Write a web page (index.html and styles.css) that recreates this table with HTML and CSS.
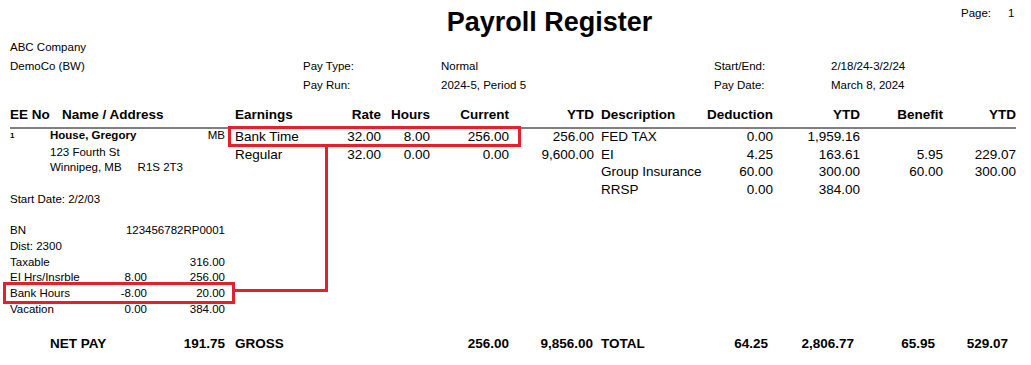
FILE: index.html
```html
<!DOCTYPE html>
<html lang="en">
<head>
<meta charset="utf-8">
<title>Payroll Register</title>
<link rel="stylesheet" href="styles.css">
</head>
<body>
<div class="sheet">
  <div class="top">
    <h1 class="title">Payroll Register</h1>
    <div class="pageno"><span>Page:</span><span>1</span></div>
  </div>

  <div class="info">
    <div>ABC Company</div><div></div><div></div><div></div><div></div>
    <div>DemoCo (BW)</div><div>Pay Type:</div><div>Normal</div><div>Start/End:</div><div>2/18/24-3/2/24</div>
    <div></div><div>Pay Run:</div><div>2024-5, Period 5</div><div>Pay Date:</div><div>March 8, 2024</div>
  </div>

  <div class="row head">
    <div class="left lhead"><span class="eeno">EE No</span><span>Name / Address</span></div>
    <div class="earn">
      <span>Earnings</span><span class="r">Rate</span><span class="r">Hours</span><span class="r">Current</span><span class="r">YTD</span>
    </div>
    <div class="ded">
      <span>Description</span><span class="r">Deduction</span><span class="r">YTD</span><span class="r">Benefit</span><span class="r">YTD</span>
    </div>
  </div>

  <div class="row body">
    <div class="left emp">
      <div class="emp-top"><div class="num"><span>1</span></div><div class="name">House, Gregory</div><div class="prov">MB</div></div>
      <div class="indent">123 Fourth St</div>
      <div class="indent">Winnipeg, MB<span class="postal">R1S 2T3</span></div>
      <div class="blank"></div>
      <div>Start Date: 2/2/03</div>
      <div class="blank"></div>
      <div class="kv"><span>BN</span><span class="r span2">123456782RP0001</span></div>
      <div>Dist: 2300</div>
      <div class="kv"><span>Taxable</span><span></span><span class="r">316.00</span></div>
      <div class="kv"><span>EI Hrs/Insrble</span><span class="r">8.00</span><span class="r">256.00</span></div>
      <div class="kv"><span>Bank Hours</span><span class="r">-8.00</span><span class="r">20.00</span></div>
      <div class="kv"><span>Vacation</span><span class="r">0.00</span><span class="r">384.00</span></div>
    </div>
    <div class="earn rows">
      <span>Bank Time</span><span class="r">32.00</span><span class="r">8.00</span><span class="r">256.00</span><span class="r">256.00</span>
      <span>Regular</span><span class="r">32.00</span><span class="r">0.00</span><span class="r">0.00</span><span class="r">9,600.00</span>
    </div>
    <div class="ded rows">
      <span>FED TAX</span><span class="r">0.00</span><span class="r">1,959.16</span><span></span><span></span>
      <span>EI</span><span class="r">4.25</span><span class="r">163.61</span><span class="r">5.95</span><span class="r">229.07</span>
      <span>Group Insurance</span><span class="r">60.00</span><span class="r">300.00</span><span class="r">60.00</span><span class="r">300.00</span>
      <span>RRSP</span><span class="r">0.00</span><span class="r">384.00</span><span></span><span></span>
    </div>
  </div>

  <div class="row foot">
    <div class="left netpay"><span>NET PAY</span><span>191.75</span></div>
    <div class="earn">
      <span>GROSS</span><span></span><span></span><span class="r">256.00</span><span class="r p1">9,856.00</span>
    </div>
    <div class="ded">
      <span>TOTAL</span><span class="r p5">64.25</span><span class="r p6">2,806.77</span><span class="r p8">65.95</span><span class="r p8">529.07</span>
    </div>
  </div>

  <div class="mark box1"></div>
  <div class="mark box2"></div>
  <div class="mark vline"></div>
  <div class="mark hline"></div>
</div>
</body>
</html>
```
FILE: styles.css
```css
html, body {
  margin: 0;
  padding: 0;
  background: #ffffff;
}

body {
  font-family: "Liberation Sans", Arial, sans-serif;
  color: #000000;
}

.sheet {
  position: relative;
  width: 1031px;
  height: 365px;
  overflow: hidden;
}

/* ---------- title ---------- */
.top {
  display: flex;
  align-items: flex-start;
  padding-top: 6px;
}

.title {
  flex: 1;
  margin: 1px 0 0;
  padding-left: 138px;
  text-align: center;
  font-size: 27px;
  font-weight: bold;
  line-height: 31px;
}

.pageno {
  width: 70px;
  display: flex;
  gap: 17px;
  font-size: 11.5px;
  line-height: 15.7px;
}

/* ---------- info block ---------- */
.info {
  display: grid;
  grid-template-columns: 293px 138px 273px 117px 1fr;
  margin-left: 10px;
  font-size: 11.5px;
  line-height: 19px;
  white-space: nowrap;
}

/* ---------- table rows ---------- */
.row {
  display: flex;
  margin-left: 10px;
  width: 1006px;
  white-space: nowrap;
}

.left {
  width: 215px;
  margin-right: 10px;
  flex: none;
}

.earn {
  display: grid;
  grid-template-columns: 96px 50px 49px 79px 85px;
  width: 359px;
  margin-right: 7px;
  flex: none;
  align-content: start;
}

.ded {
  display: grid;
  grid-template-columns: 99px 73px 87px 83px 73px;
  width: 415px;
  flex: none;
  align-content: start;
}

.r {
  text-align: right;
}

/* header */
.head {
  margin-top: 11px;
  font-size: 13.5px;
  font-weight: bold;
  line-height: 18px;
  padding-bottom: 3px;
  border-bottom: 2px solid #7f7f7f;
}

.lhead {
  display: flex;
}

.eeno {
  width: 52px;
}

/* body */
.body {
  margin-top: -1px;
}

.rows {
  font-size: 13.5px;
  line-height: 17.6px;
}

.emp {
  font-size: 11.5px;
  line-height: 15.7px;
}

.emp-top {
  display: grid;
  grid-template-columns: 40px 1fr auto;
}

.num span {
  font-size: 8px;
  font-weight: bold;
  vertical-align: 2px;
}

.name {
  font-weight: bold;
}

.indent {
  padding-left: 40px;
}

.postal {
  margin-left: 16px;
}

.blank {
  height: 15.7px;
}

.kv {
  display: grid;
  grid-template-columns: 1fr 60px 78px;
}

.span2 {
  grid-column: 2 / 4;
}

/* footer */
.foot {
  margin-top: 18px;
  font-size: 13.5px;
  font-weight: bold;
  line-height: 17.6px;
}

.netpay {
  display: flex;
  justify-content: space-between;
  padding-left: 40px;
  box-sizing: border-box;
}

.p1 { padding-right: 1px; }
.p5 { padding-right: 5px; }
.p6 { padding-right: 6px; }
.p8 { padding-right: 8px; }

/* ---------- red annotations (overlay) ---------- */
.mark {
  position: absolute;
  box-sizing: border-box;
}

.box1 {
  left: 228px;
  top: 126px;
  width: 293px;
  height: 21px;
  border: 3px solid #e4202b;
}

.box2 {
  left: 3px;
  top: 282px;
  width: 232px;
  height: 22px;
  border: 3px solid #e4202b;
}

.vline {
  left: 325px;
  top: 146px;
  width: 3px;
  height: 146px;
  background: #e4202b;
}

.hline {
  left: 234px;
  top: 289px;
  width: 94px;
  height: 3px;
  background: #e4202b;
}
```
